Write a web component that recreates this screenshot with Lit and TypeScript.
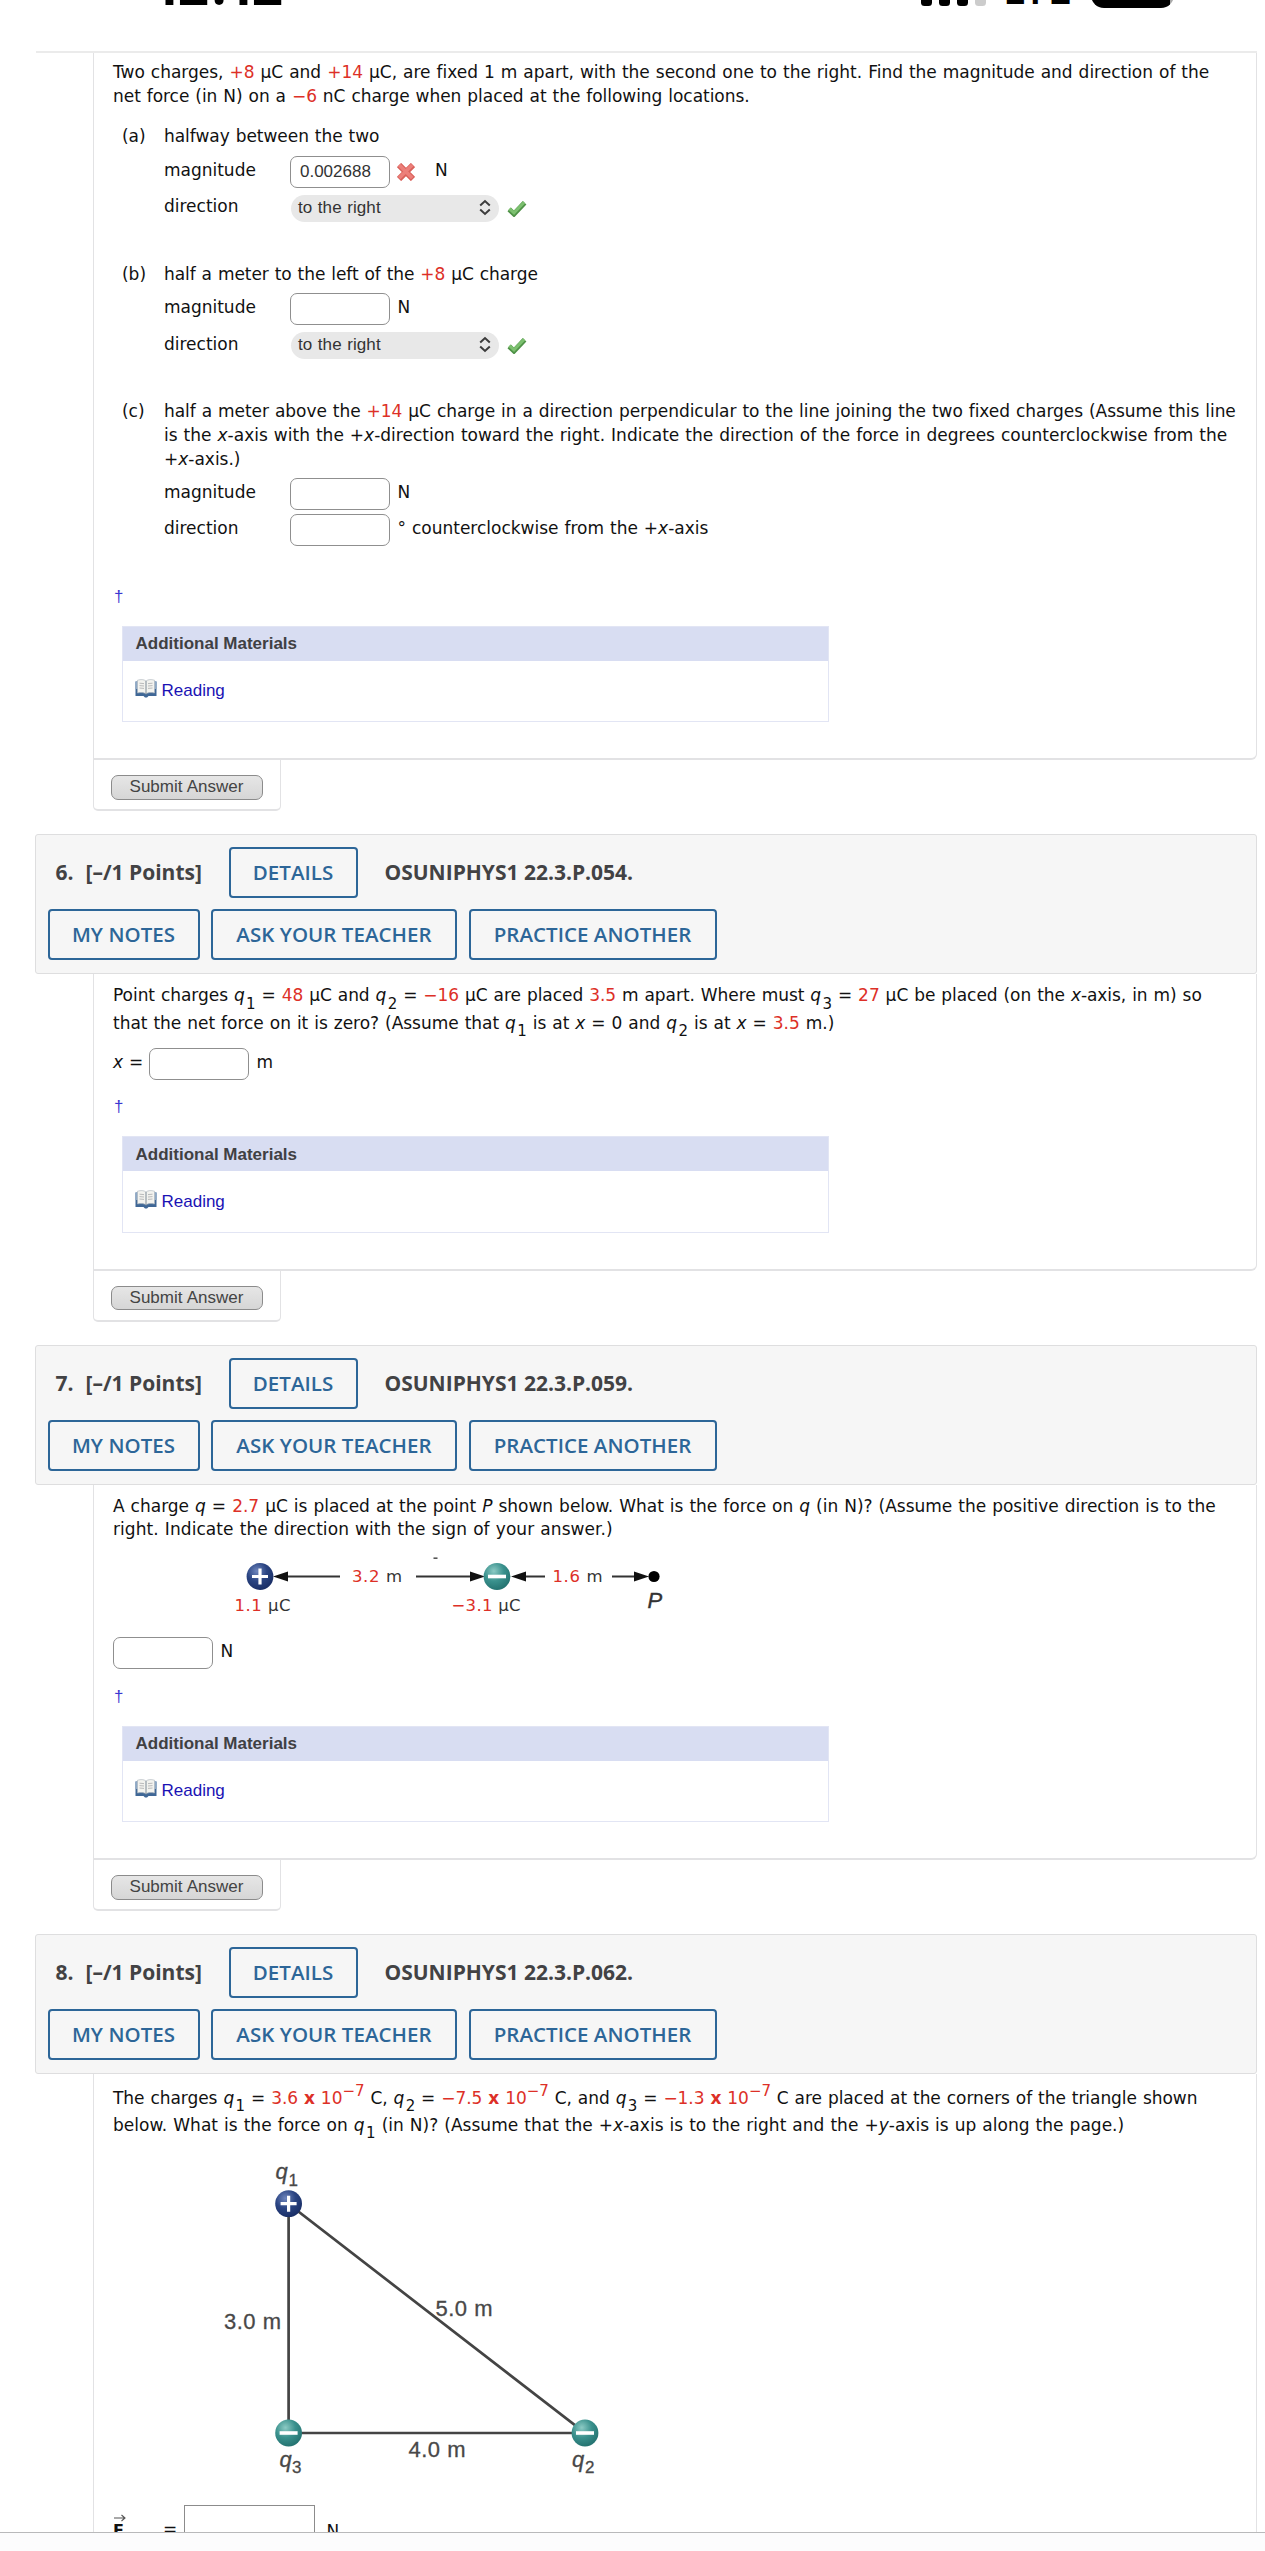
import { LitElement, html, css, svg, TemplateResult } from "lit";
import { customElement } from "lit/decorators.js";
import { styleMap } from "lit/directives/style-map.js";

const red = (t: string) => html`<span class="red">${t}</span>`;
const q = (n: string) => html`<i>q</i><sub>${n}</sub>`;
const sci = (m: string) => html`<span class="red">${m} <b>x</b> 10<sup>−7</sup></span>`;
/** One typeset line; tracking is the letter spacing of that line in pixels. */
const line = (content: unknown, tracking = -0.01) =>
  html`<div class="line" style=${styleMap({ letterSpacing: `${tracking}px` })}>${content}</div>`;

const cross = svg`<svg class="cross" width="18" height="18" viewBox="0 0 18 18"><path d="M2 2L16 16M16 2L2 16" stroke="#d9605a" stroke-width="6"/><path d="M2.2 2L15.2 15M15.2 2L2.2 15" stroke="#ec7f7a" stroke-width="3.6"/></svg>`;
const check = svg`<svg class="check" width="20" height="17" viewBox="0 0 20 17"><path d="M2.2 9.4L7 14L17.6 2.8" fill="none" stroke="#4f9247" stroke-width="5"/><path d="M2.4 8.6L7 12.9L17.2 2.2" fill="none" stroke="#7cc06f" stroke-width="3"/></svg>`;
const book = svg`<svg class="book" width="22" height="19" viewBox="0 0 22 19"><path d="M0.5 2.5V17H8.5L10 18.5H12L13.5 17H21.5V2.5Z" fill="#3f6796"/><path d="M0.5 2.5V10H21.5V2.5Z" fill="#8fa9c4"/><path d="M2.5 1.2C6 0.2 9 0.4 11 2C13 0.4 16 0.2 19.5 1.2V14C16 13.2 13 13.4 11 15C9 13.4 6 13.2 2.5 14Z" fill="#f3f3ef" stroke="#a9b2ba" stroke-width=".6"/><path d="M11 2V15" stroke="#7d8a96" stroke-width="1"/><path d="M4.5 4.2L9 4.6M4.5 6.6L9 7M4.5 9L9 9.4M13 4.6L17.5 4.2M13 7L17.5 6.6M13 9.4L17.5 9" stroke="#b9babb" stroke-width="1"/></svg>`;

const plus = (x: number, y: number) => svg`<circle cx=${x} cy=${y} r="13.4" fill="url(#navy)"/><path d="M${x - 8} ${y}H${x + 8}M${x} ${y - 8}V${y + 8}" stroke="#fff" stroke-width="3.2"/>`;
const minus = (x: number, y: number) => svg`<circle cx=${x} cy=${y} r="13.4" fill="url(#teal)"/><path d="M${x - 9} ${y}H${x + 9}" stroke="#fff" stroke-width="3.6"/>`;
const defs = svg`<defs><radialGradient id="navy" cx=".38" cy=".3" r=".75"><stop offset="0" stop-color="#6f86bd"/><stop offset=".5" stop-color="#2a4482"/><stop offset="1" stop-color="#182c63"/></radialGradient><radialGradient id="teal" cx=".38" cy=".3" r=".75"><stop offset="0" stop-color="#8ccac4"/><stop offset=".5" stop-color="#3a918d"/><stop offset="1" stop-color="#22706e"/></radialGradient></defs>`;

@customElement("app-root")
export class AppRoot extends LitElement {
  static styles = css`
    :host { display: block; width: 1265px; height: 2551px; overflow: hidden; background: #fff; color: #111; font: 17px/23.6px "DejaVu Sans", Verdana, sans-serif; word-spacing: 0.6px; letter-spacing: -0.01px; }
    * { box-sizing: border-box; }
    .view { height: 2532px; overflow: hidden; }
    .toolbar { height: 19px; background: #fcfcfd; border-top: 1.5px solid #b9b9bb; }
    .status { height: 51px; display: flex; justify-content: space-between; padding: 0 91px 0 154px; overflow: hidden; color: #000; }
    .clock { font: 700 53px/53px Inter, sans-serif; margin-top: -39.8px; height: 53px; }
    .signals { display: flex; align-items: flex-start; height: 8px; overflow: hidden; }
    .bar { width: 11px; height: 6px; margin-right: 7px; background: #000; border-radius: 0 0 3.5px 3.5px; }
    .bar.dim { background: #ccc; margin-right: 18px; }
    .lte { font: 600 38px/38px Inter, sans-serif; height: 38px; margin: -28.8px 19px 0 0; width: 68px; letter-spacing: 0.8px; }
    .battery { width: 83px; height: 42px; margin-top: -34px; padding-top: 2px; border-radius: 13px; background: linear-gradient(90deg, #000 79px, #aaa 79px); color: #fff; font: 700 32px/42px Inter, sans-serif; text-align: center; }
    .red { color: #dd3027; }
    sub, sup { font-size: 15px; line-height: 0; position: relative; vertical-align: baseline; }
    sub { top: 7.4px; margin-left: 1.4px; }
    sup { top: -7.7px; }
    .line { white-space: nowrap; }
    .tall .line { line-height: 27.2px; }
    .body { margin: 0 8.5px 0 93px; padding: 0 0 0 19px; border: solid #e2e2e4; border-width: 0 1.5px 2px 1px; border-radius: 0 0 6px 0; }
    .first { border-top: 2px solid #ebebeb; margin-left: 36px; margin-right: 8.5px; }
    .first .body { margin: 0 0 0 57px; padding-top: 8px; }
    .part { display: flex; margin: 0 0 36.7px 9px; }
    .tag { width: 42px; }
    .row { height: 36.5px; display: flex; align-items: center; }
    .parts { padding-top: 17.3px; }
    .rows { padding-top: 4.2px; }
    .label { width: 126px; padding-bottom: 2px; }
    .input { width: 100px; height: 32px; border: 1.5px solid #8f8f8f; border-radius: 7px; background: #fff; font: 17px/29px "Liberation Sans", Arial, sans-serif; color: #333; padding-left: 9px; }
    .unit { padding: 0 0 2px 7.5px; }
    .cross { margin-left: 7px; }
    .cross + .unit { padding-left: 20px; }
    .select { width: 208px; height: 27px; margin-left: 1px; border-radius: 14px; background: #e8e8e8; display: flex; align-items: center; justify-content: space-between; padding: 0 8px 1px 7px; color: #333; font: 17px/26px "Liberation Sans", Arial, sans-serif; letter-spacing: 0.1px; }
    .check { margin-left: 8px; }
    .dagger { height: 40.8px; color: #3a37d0; font: 17px/23px "Liberation Sans", Arial, sans-serif; padding-left: 1px; }
    .materials { width: 707px; height: 96.5px; margin: 0 0 36px 8.5px; border: 1.5px solid #e2e5f4; display: flex; flex-direction: column; font: 17px/24px "Liberation Sans", Arial, sans-serif; word-spacing: 0; letter-spacing: 0; }
    .materials-head { height: 34px; background: #d8ddf2; font-weight: 700; padding: 5.5px 13px 0; color: #404043; }
    .materials-body { display: flex; gap: 5px; padding: 18.5px 12px; color: #1a12b4; height: 60px; }
    .tab { width: 188px; height: 51px; margin: 0 0 23px 93px; border: solid #e2e2e4; border-width: 0 1.5px 2px 1px; border-radius: 0 0 5px 5px; padding: 15px 0 0 16.5px; background: #fff; }
    .submit { width: 152px; height: 24.5px; border: 1.5px solid #8b8b8b; border-radius: 7px; background: linear-gradient(#e6e6e6, #d6d6d6); color: #444; font: 17px/22.5px "Liberation Sans", Arial, sans-serif; text-align: center; }
    .header { height: 140px; margin: 0 8.5px 0 35px; border: 1.5px solid #dededf; border-radius: 3px; background: #f6f6f6; padding: 12px 0 0 11.5px; display: flex; flex-direction: column; gap: 11px; font: 700 21px/50px "Open Sans", sans-serif; word-spacing: 0; color: #424244; }
    .header-row { display: flex; height: 51px; }
    .num { padding-left: 8px; width: 38px; }
    .points { width: 143px; }
    .code { padding-left: 27px; }
    .btn { border: 2.5px solid #2d6698; border-radius: 4px; font-weight: 600; font-size: 20.5px; line-height: 47px; color: #2d6698; height: 51px; text-align: center; letter-spacing: 0.04px; }
    .header-row .btn + .btn { margin-left: 11.5px; }
    .w-details { width: 129px; }
    .w-notes { width: 152px; }
    .w-ask { width: 246px; }
    .w-practice { width: 248px; }
    .b6 { padding-top: 8px; }
    .b7 { padding-top: 9.8px; }
    .b8 { padding-top: 10.2px; }
    .q6row { margin-top: 8.8px; margin-bottom: 13.4px; }
    .q7row { margin-bottom: 13.8px; }
    .xeq { width: 36px; padding-bottom: 2px; }
    .diagram { display: block; overflow: visible; letter-spacing: 0; word-spacing: 0; }
    .vec { display: flex; height: 60px; }
    .vec-f { width: 50px; display: flex; flex-direction: column; font-weight: 700; font-size: 16px; line-height: 18px; }
    .vec-arrow { display: block; margin: 9px 0 0 1px; }
    .veq { width: 20.5px; padding-top: 12.6px; }
    .vbox { width: 131px; height: 50px; border: 1.5px solid #8c8c8c; }
    .vn { padding: 14.7px 0 0 12px; }
  `;

  label(t: string) { return html`<span class="label">${t}</span>`; }

  unit(t: unknown) { return html`<span class="unit">${t}</span>`; }

  select() {
    return html`<span class="select">to the right<svg width="12" height="17" viewBox="0 0 12 17"><path d="M1.2 6.5L6 2L10.8 6.5M1.2 10.5L6 15L10.8 10.5" fill="none" stroke="#3c3c3c" stroke-width="2"/></svg></span>${check}`;
  }

  header(n: number, code: string) {
    return html`<div class="header">
      <div class="header-row"><span class="num">${n}.</span><span class="points">[–/1 Points]</span><span class="btn w-details">DETAILS</span><span class="code">${code}</span></div>
      <div class="header-row"><span class="btn w-notes">MY NOTES</span><span class="btn w-ask">ASK YOUR TEACHER</span><span class="btn w-practice">PRACTICE ANOTHER</span></div>
    </div>`;
  }

  materials() {
    return html`<div class="dagger">†</div>
      <div class="materials"><div class="materials-head">Additional Materials</div><div class="materials-body">${book}<span>Reading</span></div></div>`;
  }

  tab() { return html`<div class="tab"><div class="submit">Submit Answer</div></div>`; }

  part(tag: string, text: TemplateResult | TemplateResult[], mag: unknown, dir: unknown) {
    return html`<div class="part"><span class="tag">${tag}</span><div>${text}<div class="rows">
      <div class="row">${this.label("magnitude")}${mag}</div><div class="row">${this.label("direction")}${dir}</div></div></div></div>`;
  }

  input(v = "") { return html`<span class="input">${v}</span>`; }

  render() {
    return html`<div class="view">
      <div class="status"><span class="clock">12:12</span><span class="signals"><span class="bar"></span><span class="bar"></span><span class="bar"></span><span class="bar dim"></span><span class="lte">LTE</span><span class="battery">88</span></span></div>
      <div class="first"><div class="body">
        ${line(html`Two charges, ${red("+8")} µC and ${red("+14")} µC, are fixed 1 m apart, with the second one to the right. Find the magnitude and direction of the`)}
        ${line(html`net force (in N) on a ${red("−6")} nC charge when placed at the following locations.`, -0.04)}
        <div class="parts">
          ${this.part("(a)", line("halfway between the two", -0.04), html`${this.input("0.002688")}${cross}${this.unit("N")}`, this.select())}
          ${this.part("(b)", line(html`half a meter to the left of the ${red("+8")} µC charge`, -0.06), html`${this.input()}${this.unit("N")}`, this.select())}
          ${this.part("(c)", [
            line(html`half a meter above the ${red("+14")} µC charge in a direction perpendicular to the line joining the two fixed charges (Assume this line`, -0.04),
            line(html`is the <i>x</i>-axis with the +<i>x</i>-direction toward the right. Indicate the direction of the force in degrees counterclockwise from the`, 0.005),
            line(html`+<i>x</i>-axis.)`)],
            html`${this.input()}${this.unit("N")}`,
            html`${this.input()}${this.unit(html`° counterclockwise from the +<i>x</i>-axis`)}`)}
        </div>
        ${this.materials()}
      </div></div>
      ${this.tab()}

      ${this.header(6, "OSUNIPHYS1 22.3.P.054.")}
      <div class="body b6 tall">
        ${line(html`Point charges ${q("1")} = ${red("48")} µC and ${q("2")} = ${red("−16")} µC are placed ${red("3.5")} m apart. Where must ${q("3")} = ${red("27")} µC be placed (on the <i>x</i>-axis, in m) so`, -0.045)}
        ${line(html`that the net force on it is zero? (Assume that ${q("1")} is at <i>x</i> = 0 and ${q("2")} is at <i>x</i> = ${red("3.5")} m.)`, -0.02)}
        <div class="row q6row"><span class="xeq"><i>x</i> =</span>${this.input()}${this.unit("m")}</div>
        ${this.materials()}
      </div>
      ${this.tab()}

      ${this.header(7, "OSUNIPHYS1 22.3.P.059.")}
      <div class="body b7">
        ${line(html`A charge <i>q</i> = ${red("2.7")} µC is placed at the point <i>P</i> shown below. What is the force on <i>q</i> (in N)? (Assume the positive direction is to the`, -0.005)}
        ${line("right. Indicate the direction with the sign of your answer.)", 0.07)}
        <svg class="diagram" width="640" height="93" viewBox="113 1541.5 640 93" font-family="DejaVu Sans, Verdana, sans-serif" font-size="16.5" fill="#333">
          ${defs}
          <path d="M282 1576H340M416 1576H474M522 1576H545M612 1576H640" stroke="#333" stroke-width="2.2"/>
          <path d="M273 1576L288 1571V1581ZM485 1576L470 1571V1581ZM511 1576L526 1571V1581ZM649 1576L634 1571V1581Z" fill="#111"/>
          <path d="M433.5 1557.7H437.5" stroke="#555" stroke-width="1.6"/>
          ${plus(260, 1576)}${minus(497, 1576)}
          <circle cx="654" cy="1576" r="5.6" fill="#000"/>
          <text x="352" y="1581.5" textLength="50"><tspan fill="#dd3027">3.2</tspan> m</text>
          <text x="552.5" y="1581.5" textLength="50"><tspan fill="#dd3027">1.6</tspan> m</text>
          <text x="234.5" y="1610" textLength="56"><tspan fill="#dd3027">1.1</tspan> µC</text>
          <text x="451.5" y="1610" textLength="69"><tspan fill="#dd3027">−3.1</tspan> µC</text>
          <text x="647.5" y="1607.5" font-family="Liberation Sans, sans-serif" font-style="italic" font-size="22" stroke="#333" stroke-width=".4">P</text>
        </svg>
        <div class="row q7row">${this.input()}${this.unit("N")}</div>
        ${this.materials()}
      </div>
      ${this.tab()}

      ${this.header(8, "OSUNIPHYS1 22.3.P.062.")}
      <div class="body b8 tall">
        ${line(html`The charges ${q("1")} = ${sci("3.6")} C, ${q("2")} = ${sci("−7.5")} C, and ${q("3")} = ${sci("−1.3")} C are placed at the corners of the triangle shown`, -0.05)}
        ${line(html`below. What is the force on ${q("1")} (in N)? (Assume that the +<i>x</i>-axis is to the right and the +<i>y</i>-axis is up along the page.)`, 0.02)}
        <svg class="diagram" width="640" height="366.3" viewBox="113 2138 640 366.3" font-family="Liberation Sans, sans-serif" font-size="22" fill="#484848">
          ${defs}
          <path d="M288.6 2203V2432H585Z" fill="none" stroke="#444" stroke-width="2.7"/>
          ${plus(288.6, 2202.7)}${minus(288.6, 2432)}${minus(585, 2432)}
          <g stroke="#484848" stroke-width=".3">
            <text x="224" y="2327.7" textLength="57">3.0 m</text>
            <text x="435.5" y="2315" textLength="57">5.0 m</text>
            <text x="408.5" y="2456.5" textLength="57">4.0 m</text>
            <text x="275.5" y="2178.5" font-style="italic">q</text><text x="288.5" y="2185" font-size="17">1</text>
            <text x="279.5" y="2466" font-style="italic">q</text><text x="292" y="2472.5" font-size="17">3</text>
            <text x="572" y="2466" font-style="italic">q</text><text x="585" y="2472.5" font-size="17">2</text>
          </g>
        </svg>
        <div class="vec"><span class="vec-f"><svg class="vec-arrow" width="12" height="8" viewBox="0 0 12 8"><path d="M0 4H11M7.5 1L11 4L7.5 7" fill="none" stroke="#555" stroke-width="1.1"/></svg><span>F</span></span><span class="veq">=</span><span class="vbox"></span><span class="vn">N</span></div>
      </div>
    </div><div class="toolbar"></div>`;
  }
}
